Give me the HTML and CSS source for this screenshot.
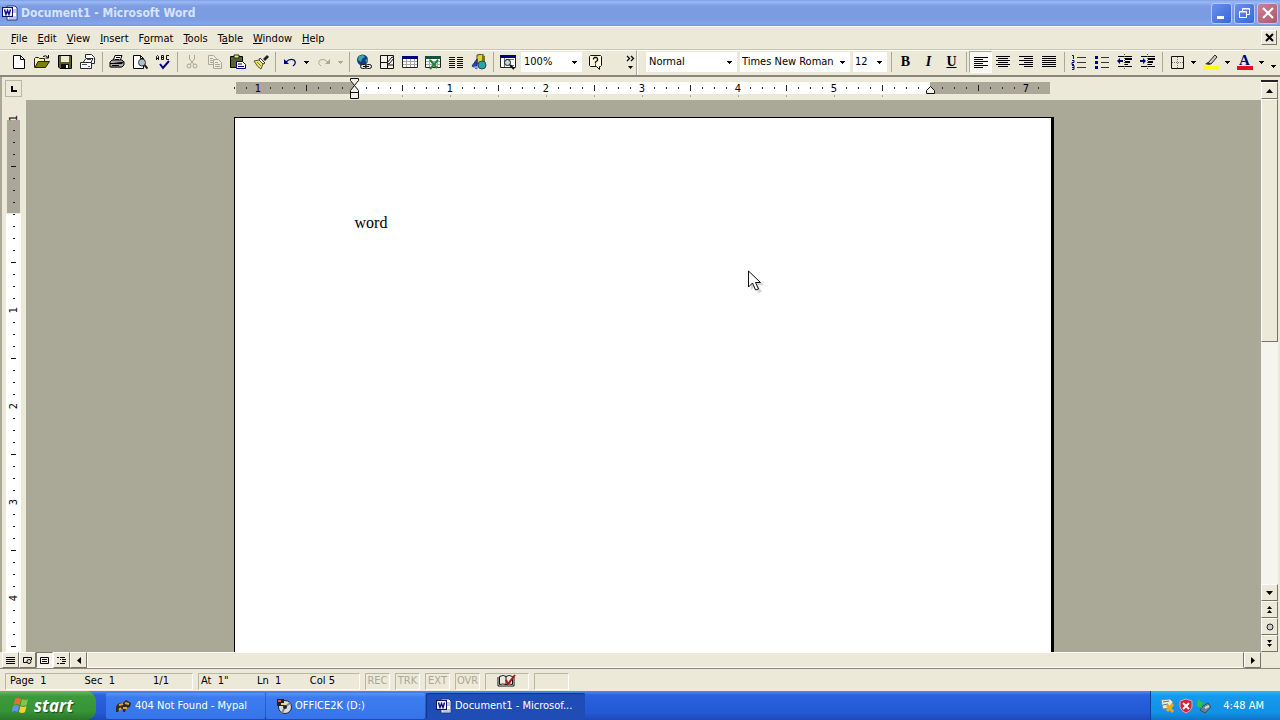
FILE: index.html
```html
<!DOCTYPE html>
<html lang="en">
<head>
<meta charset="utf-8">
<title>Document1 - Microsoft Word</title>
<link rel="stylesheet" href="styles.css">
</head>
<body>
<svg class="defs" aria-hidden="true">
  <symbol id="down" viewBox="0 0 5 3"><path d="M0 0h5v1h-1v1h-1v1h-1v-1h-1v-1h-1z"/></symbol>
  <symbol id="word" viewBox="0 0 16 16"><path d="M5 1h8l2 2v12H5z" fill="#fff" stroke="#223a80"/><path d="M11 5h3M11 7h3M7 12h7M7 14h7" stroke="#7d8cb8"/><path d="M0 2h11v10H0z" fill="#101070"/><path d="M1.500 3.500h8v7h-8z" fill="#e8ecff" stroke="#fff"/><path d="M2.500 4.500l1.500 5 1.500-4 1.500 4 1.500-5" fill="none" stroke="#101080" stroke-width="1.400"/></symbol>
</svg>
<div class="app">
  <header class="titlebar">
    <svg class="i16"><use href="#word"/></svg>
    <h1 class="title">Document1 - Microsoft Word</h1>
    <button class="win" aria-label="Minimize"><svg class="i16" viewBox="0 0 16 16"><path d="M3 11h7v3H3z" fill="#fff"/></svg></button>
    <button class="win" aria-label="Restore"><svg class="i16" viewBox="0 0 16 16" fill="none" stroke="#fff"><path d="M5.500 6V3.500h7v6H10M5 4h8"/><path d="M2.500 6.500h7v6h-7zM2 7h8"/></svg></button>
    <button class="win close" aria-label="Close"><svg class="i16" viewBox="0 0 16 16"><path d="M3 3l10 10M13 3L3 13" stroke="#fff" stroke-width="2.200"/></svg></button>
  </header>
  <nav class="menubar">
    <button class="menu"><u>F</u>ile</button><button class="menu"><u>E</u>dit</button><button class="menu"><u>V</u>iew</button><button class="menu"><u>I</u>nsert</button><button class="menu">F<u>o</u>rmat</button><button class="menu"><u>T</u>ools</button><button class="menu">T<u>a</u>ble</button><button class="menu"><u>W</u>indow</button><button class="menu"><u>H</u>elp</button>
    <button class="docclose" aria-label="Close document"><svg width="9" height="9" viewBox="0 0 9 9"><path d="M1 1l7 7M8 1L1 8" stroke="#000" stroke-width="2"/></svg></button>
  </nav>
  <div class="toolbars">
    <div class="bar standard">
      <button class="tb" aria-label="New"><svg class="i16" viewBox="0 0 16 16"><path d="M2.500 1.500h7l4 4v9h-11zM9.500 1.500v4h4" fill="#fff" stroke="#000"/></svg></button>
      <button class="tb" aria-label="Open"><svg class="i16" viewBox="0 0 16 16"><path d="M.5 13.500v-9l1-1h3l1 1h5v3" fill="#ffffa0" stroke="#222"/><path d="M1 13.500l3-6h11.500l-4 6z" fill="#808000" stroke="#222"/><path d="M9 2.500q3-2 5 1M14.500 1v3h-3" fill="none" stroke="#000"/></svg></button>
      <button class="tb" aria-label="Save"><svg class="i16" viewBox="0 0 16 16"><path d="M1.500 1.500h13v13H3l-1.500-1.500z" fill="#5e611f" stroke="#000"/><path d="M4 2h8v6H4z" fill="#e9e9df"/><path d="M4 10h8v4H4z" fill="#111"/><path d="M9 11h2v3H9z" fill="#fff"/></svg></button>
      <button class="tb" aria-label="Mail Recipient"><svg class="i16" viewBox="0 0 16 16" stroke="#26262e" fill="#fff"><path d="M5.500 4V.5h6l3 3v6h-4"/><path d="M3 8.500l3-4h7l-2 4"/><path d="M.5 8.500h11v6H.5z"/><path d="M2 10.500h5M8 12.500h2M7 5.500h4" stroke="#456"/></svg></button>
      <span class="sep"></span>
      <button class="tb" aria-label="Print"><svg class="i16" viewBox="0 0 16 16" stroke="#000"><path d="M4 7l2-5.500h7L11 7" fill="#fff"/><path d="M1 8l2-2h10l2 2v3l-2 2H1z" fill="#aaa"/><path d="M7 3.500h4M6 5.500h4M1 9.500h12l2-2M3 11.500h7"/><path d="M2 13.500h10" stroke="#555"/></svg></button>
      <button class="tb" aria-label="Print Preview"><svg class="i16" viewBox="0 0 16 16"><path d="M1.500 1.500h7l3 3v10h-10zM8.500 1.500v3h3" fill="#fff" stroke="#000"/><circle cx="10" cy="8.500" r="3.500" fill="#a9c3cc" stroke="#333"/><path d="M12.500 11l3 3.500" stroke="#222" stroke-width="2"/></svg></button>
      <button class="tb" aria-label="Spelling and Grammar"><svg class="i16" viewBox="0 0 16 16" fill="none"><path d="M1.500 6V2.500l1-1 1 1V6M1.500 4.500h2M6.500 1.500v4M6.500 1.500h2v4h-2M6.500 3.500h2M14 1.500h-2.500v4H14" stroke="#111"/><path d="M5 10l3 4 6-7" stroke="#000080" stroke-width="2"/></svg></button>
      <span class="sep"></span>
      <button class="tb" aria-label="Cut" disabled><svg class="i16" viewBox="0 0 16 16" fill="none" stroke="#aaa899"><path d="M5.500 1v4l5 6M10.500 1v4l-5 6"/><circle cx="5" cy="12" r="2"/><circle cx="11" cy="12" r="2"/></svg></button>
      <button class="tb" aria-label="Copy" disabled><svg class="i16" viewBox="0 0 16 16" fill="#efecdf" stroke="#aaa899"><path d="M1.500 1.500h5l3 3v6h-8zM3 4.500h3M3 6.500h4M3 8.500h3"/><path d="M6.500 5.500h5l3 3v6h-8zM8 8.500h3M8 10.500h5M8 12.500h5"/></svg></button>
      <button class="tb" aria-label="Paste"><svg class="i16" viewBox="0 0 16 16"><path d="M.5 2.500h12v11H.5z" fill="#59602b" stroke="#000"/><path d="M4 1h5v3H4z" fill="#eee98a" stroke="#222"/><path d="M6.500 7.500h6l3 3v4h-9z" fill="#fff" stroke="#000080"/><path d="M8 10h4M8 12.500h6" stroke="#000080"/></svg></button>
      <button class="tb" aria-label="Format Painter"><svg class="i16" viewBox="0 0 16 16"><path d="M10 5l4-4 2 2-4 4z" fill="#222"/><path d="M7 4l5 5-2 1-4-4z" fill="#fff" stroke="#333"/><path d="M1 7l5-1 4 4-2 5q-3-1-7-8z" fill="#eee36c" stroke="#5d5a28"/><path d="M4 8l4 4" stroke="#777"/></svg></button>
      <span class="sep"></span>
      <button class="tb" aria-label="Undo"><svg class="i16" viewBox="0 0 16 16"><path d="M4 8q4-4 8-2 3 3-1 6" fill="none" stroke="#000080" stroke-width="1.300"/><path d="M2 5v5h5z" fill="#000080"/></svg></button>
      <button class="drop" aria-label="Undo list"><svg width="5" height="3"><use href="#down"/></svg></button>
      <button class="tb" aria-label="Redo" disabled><svg class="i16" viewBox="0 0 16 16"><path d="M12 8q-4-4-8-2-3 3 1 6" fill="none" stroke="#aaa899"/><path d="M14 5v5H9z" fill="#aaa899"/></svg></button>
      <button class="drop" aria-label="Redo list" disabled><svg width="5" height="3" fill="#aaa899"><use href="#down"/></svg></button>
      <span class="sep"></span>
      <button class="tb" aria-label="Hyperlink"><svg class="i16" viewBox="0 0 16 16"><circle cx="6.500" cy="6" r="5.500" fill="#123a86"/><path d="M3 2l4-1 2 2-3 2-1 3-3-2zM9 6l3-1-1 4z" fill="#35a99a"/><rect x="4.500" y="10.500" width="6" height="4" rx="2" fill="#ddd" stroke="#111"/><rect x="9.500" y="10.500" width="6" height="4" rx="2" fill="#ddd" stroke="#111"/><path d="M7 12.500h6" stroke="#111"/></svg></button>
      <button class="tb" aria-label="Tables and Borders"><svg class="i16" viewBox="0 0 16 16"><path d="M1.500 1.500h13v13h-13zM8.500 1.500v13M1.500 8.500h7M8 11h6" fill="#f5f2e6" stroke="#111"/><path d="M8 9l5-6 2 1-5 6z" fill="#fff" stroke="#111"/></svg></button>
      <button class="tb" aria-label="Insert Table"><svg class="i16" viewBox="0 0 16 16"><path d="M.5 2.500h15v11H.5z" fill="#fff" stroke="#222"/><path d="M0 2h16v3H0z" fill="#000080"/><path d="M1 7.500h14M1 10.500h14M4.500 5v8M8.500 5v8M12.500 5v8" stroke="#a5a5a5"/></svg></button>
      <button class="tb" aria-label="Insert Excel Worksheet"><svg class="i16" viewBox="0 0 16 16"><path d="M.5 2.500h15v11H.5z" fill="#fff" stroke="#222"/><path d="M0 2h16v3H0z" fill="#174f3d"/><path d="M1 7.500h14M1 10.500h14M4.500 5v8M12.500 5v8" stroke="#aaa"/><path d="M5 6l7 8M13 6l-8 9" stroke="#23803d" stroke-width="2"/></svg></button>
      <button class="tb" aria-label="Columns"><svg class="i16" viewBox="0 0 16 16"><path d="M1 3.500h6M9 3.500h6M1 5.500h6M9 5.500h6M1 7.500h6M9 7.500h6M1 9.500h6M9 9.500h6M1 11.500h6M9 11.500h6M1 13.500h6M9 13.500h6" stroke="#111"/></svg></button>
      <button class="tb" aria-label="Drawing"><svg class="i16" viewBox="0 0 16 16"><path d="M6 1l6-1v9l-6 1z" fill="#e0d432" stroke="#444"/><path d="M11 1l3 1v8l-3 1z" fill="#767827"/><circle cx="11" cy="11" r="4" fill="#20a7a9" stroke="#345"/><path d="M1 12L6 5v10z" fill="#2447c3" stroke="#152979"/><path d="M0 13l7-1v3z" fill="#98a9e1"/></svg></button>
      <span class="sep"></span>
      <button class="tb" aria-label="Document Map"><svg class="i16" viewBox="0 0 16 16"><path d="M.5 1.500h15v12H.5z" fill="#fff" stroke="#222"/><path d="M0 1h16v3H0z" fill="#000080"/><path d="M4.500 4v9M6 5.500h8M10 11.500h4" stroke="#777"/><circle cx="7.500" cy="8.500" r="3" fill="#c7d9df" stroke="#111"/><path d="M10 11l4 4" stroke="#111" stroke-width="2"/></svg></button>
      <select class="zoom" aria-label="Zoom"><option>100%</option></select>
      <button class="tb" aria-label="Help"><svg class="i16" viewBox="0 0 16 16" fill="none" stroke="#111"><path d="M2.500 1.500h10l1 1v9l-1 1h-1v3l-3-3h-6l-1-1v-9z" fill="#fff8df"/><path d="M5.500 5.500v-1l1-1h2l1 1v2l-2 1.500v1.500M7 11h1" stroke-width="1.300"/></svg></button>
      <button class="more" aria-label="More buttons"><svg width="9" height="15" viewBox="0 0 9 15"><path d="M1 1l2.500 2.500L1 6M5 1l2.500 2.500L5 6" fill="none" stroke="#000" stroke-width="1.300"/><path d="M2 11h5l-2.500 3z"/></svg></button>
    </div>
    <div class="bar formatting">
      <select class="style" aria-label="Style"><option>Normal</option></select>
      <select class="font" aria-label="Font"><option>Times New Roman</option></select>
      <select class="size" aria-label="Font size"><option>12</option></select>
      <span class="sep"></span>
      <button class="tb glyph" aria-label="Bold"><b>B</b></button>
      <button class="tb glyph" aria-label="Italic"><i>I</i></button>
      <button class="tb glyph" aria-label="Underline"><u>U</u></button>
      <span class="sep"></span>
      <button class="tb pressed" aria-label="Align Left"><svg class="i16" viewBox="0 0 16 16"><path d="M1 3.500h14M1 5.500h9M1 7.500h14M1 9.500h9M1 11.500h14M1 13.500h9" stroke="#000"/></svg></button>
      <button class="tb" aria-label="Center"><svg class="i16" viewBox="0 0 16 16"><path d="M0 2.500h14M2 4.500h10M0 6.500h14M2 8.500h10M0 10.500h14M2 12.500h10" stroke="#000"/></svg></button>
      <button class="tb" aria-label="Align Right"><svg class="i16" viewBox="0 0 16 16"><path d="M0 2.500h14M5 4.500h9M0 6.500h14M5 8.500h9M0 10.500h14M5 12.500h9" stroke="#000"/></svg></button>
      <button class="tb" aria-label="Justify"><svg class="i16" viewBox="0 0 16 16"><path d="M0 2.500h14M0 4.500h14M0 6.500h14M0 8.500h14M0 10.500h14M0 12.500h14" stroke="#000"/></svg></button>
      <span class="sep"></span>
      <button class="tb" aria-label="Numbering"><svg class="i16" viewBox="0 0 16 16" fill="none"><path d="M6 3.500h9M6 8.500h9M6 13.500h9" stroke="#333"/><path d="M1 1.500h1.500V5M1 6.500h2v2H1v2h2M1 11.500h2v4H1M1 13.500h2" stroke="#000080"/></svg></button>
      <button class="tb" aria-label="Bullets"><svg class="i16" viewBox="0 0 16 16"><path d="M7 3.500h8M7 8.500h8M7 13.500h8" stroke="#333"/><path d="M1 2h3v3H1zM1 7h3v3H1zM1 12h3v3H1z" fill="#000080"/></svg></button>
      <button class="tb" aria-label="Decrease Indent"><svg class="i16" viewBox="0 0 16 16"><path d="M1 2.500h14M1 12.500h14M7 10.500h4" stroke="#000"/><path d="M8 5h7M8 8h5" stroke="#000" stroke-width="2"/><path d="M0 7l3-3v2h3v2H3v2z" fill="#000080"/><path d="M7.500 0v15" stroke="#555" stroke-dasharray="1 1"/></svg></button>
      <button class="tb" aria-label="Increase Indent"><svg class="i16" viewBox="0 0 16 16"><path d="M1 2.500h14M1 12.500h14M8 10.500h4" stroke="#000"/><path d="M8 5h7M8 8h5" stroke="#000" stroke-width="2"/><path d="M6 7L3 4v2H0v2h3v2z" fill="#000080"/><path d="M7.500 0v15" stroke="#555" stroke-dasharray="1 1"/></svg></button>
      <span class="sep"></span>
      <button class="tb" aria-label="Borders"><svg class="i16" viewBox="0 0 16 16" fill="none"><path d="M2.500 2.500h12v12h-12z" stroke="#111"/><path d="M8.500 3v11M3 8.500h11" stroke="#777" stroke-dasharray="1 1"/></svg></button>
      <button class="drop" aria-label="Border styles"><svg width="5" height="3"><use href="#down"/></svg></button>
      <button class="tb" aria-label="Highlight"><svg class="i16" viewBox="0 0 16 16"><path d="M5 9l7-8 2 2-6 7z" fill="#ccc" stroke="#222"/><path d="M2 10l3-2 3 2-2 1z" fill="#333"/><path d="M0 12h16v4H0z" fill="#fcfc18"/></svg></button>
      <button class="drop" aria-label="Highlight colors"><svg width="5" height="3"><use href="#down"/></svg></button>
      <button class="tb fontcolor" aria-label="Font Color"><b>A</b></button>
      <button class="drop" aria-label="Font colors"><svg width="5" height="3"><use href="#down"/></svg></button>
      <button class="more low" aria-label="More buttons"><svg width="5" height="3"><use href="#down"/></svg></button>
    </div>
  </div>
  <div class="view">
    <div class="editor">
      <div class="rulerrow">
        <button class="tabstop" aria-label="Tab selector"><svg width="6" height="6"><path d="M0 0h2v4h4v2H0z"/></svg></button>
        <div class="rulerwell">
          <svg class="hruler" width="820" height="22">
            <defs>
              <pattern id="hdots" width="12" height="22" patternUnits="userSpaceOnUse"><path d="M0 10h1v2H0z" fill="#333"/></pattern>
              <pattern id="hhalf" width="96" height="22" patternUnits="userSpaceOnUse"><path d="M72 8h1v6h-1z" fill="#222"/></pattern>
              <pattern id="htabs" width="48" height="22" patternUnits="userSpaceOnUse"><path d="M24 18h1v2h-1z" fill="#aaa899"/></pattern>
            </defs>
            <path d="M2 5h118v12H2zM696 5h120v12H696z" fill="#aca899"/><path d="M120 5h576v12H120z" fill="#fff"/>
            <path d="M0 5h816v12H0z" fill="url(#hdots)"/><path d="M24 5h791v12H24z" fill="url(#hhalf)"/><path d="M132 17h560v5H132z" fill="url(#htabs)"/>
            <path d="M20 6h8v10h-8zM788 6h8v10h-8z" fill="#aca899"/><path d="M212 6h8v10h-8zM308 6h8v10h-8zM404 6h8v10h-8zM500 6h8v10h-8zM596 6h8v10h-8z" fill="#fff"/>
            <g class="num"><text x="24" y="15">1</text><text x="216" y="15">1</text><text x="312" y="15">2</text><text x="408" y="15">3</text><text x="504" y="15">4</text><text x="600" y="15">5</text><text x="792" y="15">7</text></g>
            <path d="M116.500 1.500h8v2l-4 5 4 5v8h-8v-8l4-5-4-5zM116.500 15.500h8M692.500 16.500v-3l4-4 4 4v3z" fill="#f3f1e7" stroke="#111"/>
          </svg>
        </div>
      </div>
      <div class="workrow">
        <div class="vwell">
          <svg class="vruler" width="15" height="100%">
            <defs>
              <pattern id="vdots" y="6" width="15" height="12" patternUnits="userSpaceOnUse"><path d="M7 0h2v1H7z" fill="#222"/></pattern>
              <pattern id="vhalf" y="18" width="15" height="96" patternUnits="userSpaceOnUse"><path d="M5 48h5v1H5z" fill="#111"/></pattern>
            </defs>
            <rect width="15" height="100%" y="114" fill="#fff"/><path d="M1 20h13v93H1z" fill="#aca899"/>
            <rect y="20" width="15" height="100%" fill="url(#vdots)"/><rect y="20" width="15" height="100%" fill="url(#vhalf)"/>
            <path d="M3 205h9v10H3zM3 301h9v10H3zM3 397h9v10H3zM3 493h9v10H3z" fill="#fff"/>
            <g class="num"><text transform="translate(11 18) rotate(-90)">1</text><text transform="translate(11 210) rotate(-90)">1</text><text transform="translate(11 306) rotate(-90)">2</text><text transform="translate(11 402) rotate(-90)">3</text><text transform="translate(11 498) rotate(-90)">4</text></g>
          </svg>
        </div>
        <main class="workspace">
          <article class="page"><p>word</p>
            <svg class="cursor" width="16" height="24" viewBox="0 0 16 24"><path d="M3 3v17l4-4 3 7 4-1-4-7h6z" fill="#777" opacity=".3"/><path d="M.5 1v16l4-4 3 7 3-1-3-6.500h5z" fill="#fff" stroke="#111"/></svg>
          </article>
        </main>
      </div>
    </div>
    <div class="vscroll">
      <div class="split"></div>
      <button class="sb" aria-label="Scroll up"><svg width="7" height="4"><path d="M0 4h7L3.500 0z"/></svg></button>
      <div class="track"><div class="thumb"></div></div>
      <button class="sb" aria-label="Scroll down"><svg width="7" height="4"><path d="M0 0h7L3.500 4z"/></svg></button>
      <button class="sb" aria-label="Previous page"><svg width="5" height="7"><path d="M0 3h5L2.500 0zM0 7h5L2.500 4z"/></svg></button>
      <button class="sb" aria-label="Select browse object"><svg width="8" height="8"><circle cx="4" cy="4" r="3" fill="#ccc" stroke="#222"/></svg></button>
      <button class="sb" aria-label="Next page"><svg width="5" height="7"><path d="M0 0h5L2.500 3zM0 4h5L2.500 7z"/></svg></button>
    </div>
  </div>
  <div class="hscroll">
    <button class="sb" aria-label="Normal view"><svg width="9" height="9"><path d="M0 1.500h9M0 3.500h9M0 5.500h9M0 7.500h9" stroke="#000"/></svg></button>
    <button class="sb" aria-label="Web layout"><svg width="9" height="9" fill="none" stroke="#000"><path d="M4 6.500H.5v-5h8V4"/><circle cx="6" cy="5.500" r="2"/></svg></button>
    <button class="sb on" aria-label="Print layout"><svg width="9" height="9" fill="none" stroke="#000"><path d="M.5 1.500h8v6h-8zM2 3.500h5M2 5.500h5"/></svg></button>
    <button class="sb" aria-label="Outline view"><svg width="9" height="9" fill="none" stroke="#000"><path d="M0 1.500h2M3 1.500h5M3 3.500h1M5 3.500h4M5 5.500h4M0 7.500h2M3 7.500h5"/></svg></button>
    <button class="sb" aria-label="Scroll left"><svg width="4" height="7"><path d="M4 0v7L0 3.500z"/></svg></button>
    <div class="hthumb"></div>
    <button class="sb" aria-label="Scroll right"><svg width="4" height="7"><path d="M0 0v7l4-3.500z"/></svg></button>
  </div>
  <div class="status">
    <div class="cell c-page"><span>Page&nbsp; 1</span><span>Sec&nbsp; 1</span><span>1/1</span></div>
    <div class="cell c-at"><span>At&nbsp; 1"</span><span>Ln&nbsp; 1</span><span>Col&nbsp;5</span></div>
    <div class="cell flag">REC</div><div class="cell flag">TRK</div><div class="cell flag">EXT</div><div class="cell flag">OVR</div>
    <div class="cell c-book"><svg width="20" height="14" viewBox="0 0 20 14"><path d="M1 3v9h16V3M2.500 10.500v-8q4-2 6.500 0 3-2 6.500 0v8q-4-1-6.500 0-3-1-6.500 0zM9 2v9" fill="#fff" stroke="#111"/><path d="M9 6l2 4 7-9" stroke="#a02020" stroke-width="2" fill="none"/></svg></div>
    <div class="cell c-empty"></div>
  </div>
  <footer class="taskbar">
    <button class="start"><svg width="18" height="17" viewBox="0 0 18 17"><path d="M3 2q3-2 6 0L7.500 8q-3-2-6 0z" fill="#ed6a32"/><path d="M10 2q3 2 6 0l-1.500 6q-3 2-6 0z" fill="#83c641"/><path d="M1 9q3-2 6 0l-1.500 6q-3-2-6 0z" fill="#5e94f0"/><path d="M8.500 9q3 2 6 0L13 15q-3 2-6 0z" fill="#f7cf38"/></svg>start</button>
    <button class="task"><svg class="i16" viewBox="0 0 16 16"><path d="M0 9q2-5 7-4l3-3 5 3-1 4-4 1-1 4H7v-3H4l-2 3H0z" fill="#332b20"/><path d="M3 7l4-1M9 5l4 1M7 10h4M3 12l2-2" stroke="#dda63e" stroke-width="2"/></svg><span>404 Not Found - Mypal</span></button>
    <button class="task"><svg class="i16" viewBox="0 0 16 16"><circle cx="9" cy="9" r="6.500" fill="#d9dddc" stroke="#252525"/><path d="M9 9l5-4M9 9l-3 6" stroke="#888" stroke-width="2"/><circle cx="9" cy="9" r="2" fill="#222"/><path d="M1 1h7v7H1z" fill="#222"/><path d="M2 2h3v2H2z" fill="#e45733"/><path d="M5 5h3v2H5z" fill="#efd64f"/></svg><span>OFFICE2K (D:)</span></button>
    <button class="task active"><svg class="i16"><use href="#word"/></svg><span>Document1 - Microsof...</span></button>
    <div class="tray">
      <svg class="i16" viewBox="0 0 16 16"><path d="M1 2l9-1 3 3-2 6-8 1z" fill="#f0ead0" stroke="#888"/><path d="M3 4l6-1M3 7l5-1" stroke="#5274ad"/><path d="M7 7l6 7M13 6l-6 7" stroke="#e8aa26" stroke-width="3"/></svg>
      <svg class="i16" viewBox="0 0 16 16"><path d="M8 1l6 2v6q-1 4-6 6-5-2-6-6V3z" fill="#d82035" stroke="#dba9bd"/><path d="M5 5l6 6M11 5l-6 6" stroke="#fff" stroke-width="2"/></svg>
      <svg class="i16" viewBox="0 0 16 16"><path d="M7 8l5-3 3 4-6 6-5-3z" fill="#6f8193" stroke="#354"/><path d="M9 10l4-2" stroke="#ccd9e3" stroke-width="2"/><path d="M2 1l6 5-3 1 1 3-5-2z" fill="#2fc63d"/></svg>
      <time>4:48 AM</time>
    </div>
  </footer>
</div>
</body>
</html>
```
FILE: styles.css
```css
* { box-sizing: border-box; }
body { margin: 0; overflow: hidden; color: #000; font: 11px/14px "DejaVu Sans Condensed", "DejaVu Sans", sans-serif; background: #ece9d8; }
button, select { font: inherit; color: inherit; margin: 0; padding: 0; border: 0; background: none; border-radius: 0; }
svg { display: block; flex: none; }
.defs { position: absolute; width: 0; height: 0; }
.i16 { width: 16px; height: 16px; }
.app { height: 100vh; display: flex; flex-direction: column; }

.titlebar { flex: none; display: flex; align-items: center; height: 26px; padding: 0 2px; gap: 2px; background: linear-gradient(#7f9ee6 0, #9ab8f4 2px, #7d9ce2 6px, #7a9ae2 18px, #86a5ea 24px, #7693d8); }
.title { flex: 1; margin: 0 0 0 1px; font: bold 12px/16px "DejaVu Sans Condensed", "DejaVu Sans", sans-serif; color: #d5e4fb; }
.win { display: grid; place-items: center; width: 21px; height: 21px; border: 1px solid #b6c9f4; border-radius: 3px; background: linear-gradient(135deg, #6b90ec, #3767d8); }
.win.close { background: linear-gradient(135deg, #c88294, #b0566a); }

.menubar { flex: none; display: flex; align-items: center; height: 23px; padding: 0 3px 0 6px; border-top: 1px solid #fff; }
.menu { padding: 3px 5px 1px; }
.docclose { display: grid; place-items: center; width: 16px; height: 15px; margin: 0 0 2px auto; border: 1px solid; border-color: #fff #77756a #77756a #fff; }

.toolbars { flex: none; display: flex; height: 28px; border-top: 1px solid #c9c6b6; border-bottom: 2px solid #8a877a; }
.bar { display: flex; align-items: center; padding-bottom: 2px; border-top: 1px solid #fff; }
.standard { flex: 1; padding-left: 7px; border-right: 1px solid #aca899; }
.formatting { flex: none; padding-left: 8px; border-left: 1px solid #fff; }
.tb { flex: none; display: grid; place-items: center; width: 23px; height: 22px; }
.drop { flex: none; display: grid; place-items: center; width: 11px; height: 22px; }
.sep { flex: none; width: 1px; height: 20px; margin: 0 2px 0 3px; background: #aca899; }
.pressed { border: 1px solid; border-color: #aca899 #fff #fff #aca899; background: #f8f7f2; }
.glyph { font: bold 14px/16px "Liberation Serif", serif; }
.fontcolor { font: bold 15px/12px "Liberation Serif", serif; color: #000080; align-content: center; }
.fontcolor::after { content: ""; width: 16px; height: 4px; background: #e01020; }
.more { display: grid; place-items: center; width: 11px; height: 22px; margin-left: auto; }
.more.low { align-items: end; padding-bottom: 5px; width: 13px; }
select { appearance: none; height: 20px; padding: 0 3px; background: #fff url("data:image/svg+xml,%3Csvg xmlns='http://www.w3.org/2000/svg' width='5' height='3'%3E%3Cpath d='M0 0h5v1h-1v1h-1v1h-1v-1h-1v-1h-1z'/%3E%3C/svg%3E") no-repeat right 5px center; }
.zoom { width: 61px; margin: 0 2px; }
.style { width: 91px; margin-right: 3px; }
.font { width: 110px; margin-right: 3px; padding-left: 2px; }
.size { width: 34px; margin-right: 1px; padding-left: 2px; }

.view { flex: 1; min-height: 0; display: flex; border-left: 2px solid #aca899; }
.editor { flex: 1; min-width: 0; display: flex; flex-direction: column; }
.rulerrow { flex: none; display: flex; height: 23px; }
.tabstop { flex: none; display: grid; place-items: center; width: 17px; height: 17px; margin: 3px 3px 0; border: 1px solid #b8b5a6; }
.rulerwell { flex: 1; display: flex; justify-content: center; padding-left: 1px; }
.num { font-size: 11px; text-anchor: middle; }
.workrow { flex: 1; min-height: 0; display: flex; }
.vwell { flex: none; width: 24px; padding-left: 4px; }
.workspace { flex: 1; overflow: hidden; display: flex; justify-content: center; padding-top: 17px; background: #aaa897; }
.page { position: relative; flex: none; width: 820px; height: 1060px; padding: 95px 120px; border: solid #000; border-width: 1px 3px 0 1px; background: #fff; }
.page p { margin: 0; font: 16px/20px "Liberation Serif", "Times New Roman", serif; }
.cursor { position: absolute; left: 513px; top: 152px; }

.vscroll { flex: none; display: flex; flex-direction: column; width: 19px; padding-right: 2px; }
.split { height: 5px; border-bottom: 2px solid #222; }
.sb { flex: none; display: grid; place-items: center; width: 17px; height: 17px; border: 1px solid; border-color: #fff #77756a #77756a #fff; background: #ece9d8; }
.track { flex: 1; background: #f6f4ee; }
.thumb { height: 50%; border: 1px solid; border-color: #fff #77756a #77756a #fff; background: #ece9d8; }
.hscroll { flex: none; display: flex; height: 17px; padding: 0 19px 0 2px; border-bottom: 1px solid #8a877a; }
.hscroll .sb { height: 16px; }
.sb.on { border-color: #77756a #fff #fff #77756a; background: #f4f2e9; }
.hthumb { flex: 1; border: 1px solid; border-color: #fff #77756a #fff #fff; }

.status { flex: none; display: flex; align-items: center; gap: 5px; height: 22px; padding: 2px 5px 0; }
.cell { flex: none; display: flex; align-items: center; height: 17px; border: 1px solid; border-color: #b9b6a6 #fff #fff #b9b6a6; }
.c-page { justify-content: space-between; width: 188px; padding: 0 23px 0 4px; }
.c-at { justify-content: space-between; width: 162px; padding: 0 24px 0 2px; }
.flag { justify-content: center; width: 25px; color: #aca899; }
.c-book { justify-content: center; width: 44px; }
.c-empty { width: 35px; }

.taskbar { flex: none; display: flex; align-items: stretch; height: 29px; color: #fff; background: linear-gradient(#4f8cf0, #2a62dd 4px, #2458d4 22px, #1e49b5); }
.start { display: flex; align-items: center; gap: 4px; width: 96px; padding-left: 12px; margin-right: 10px; border-radius: 0 10px 10px 0; font: italic bold 17px/20px "Open Sans", "Noto Sans", sans-serif; color: #fff; text-shadow: 1px 1px 1px #1d4d1d; background: linear-gradient(#6cb86a, #3c9a3c 5px, #379537 20px, #2a752a); }
.task { display: flex; align-items: center; gap: 3px; width: 159px; margin: 2px 1px 1px 0; padding-left: 10px; border-radius: 2px; background: linear-gradient(#5a96f8, #3c7cf0 4px, #3774ea); }
.task.active { background: #1f4cb5; box-shadow: inset 1px 1px 1px #15368a; }
.tray { display: flex; align-items: center; gap: 2px; margin-left: auto; padding: 0 16px 0 9px; border-left: 1px solid #0c4296; background: linear-gradient(#36b4f4, #149aec 5px, #1290e6 22px, #0f73c4); }
.tray time { margin-left: 9px; }
```
